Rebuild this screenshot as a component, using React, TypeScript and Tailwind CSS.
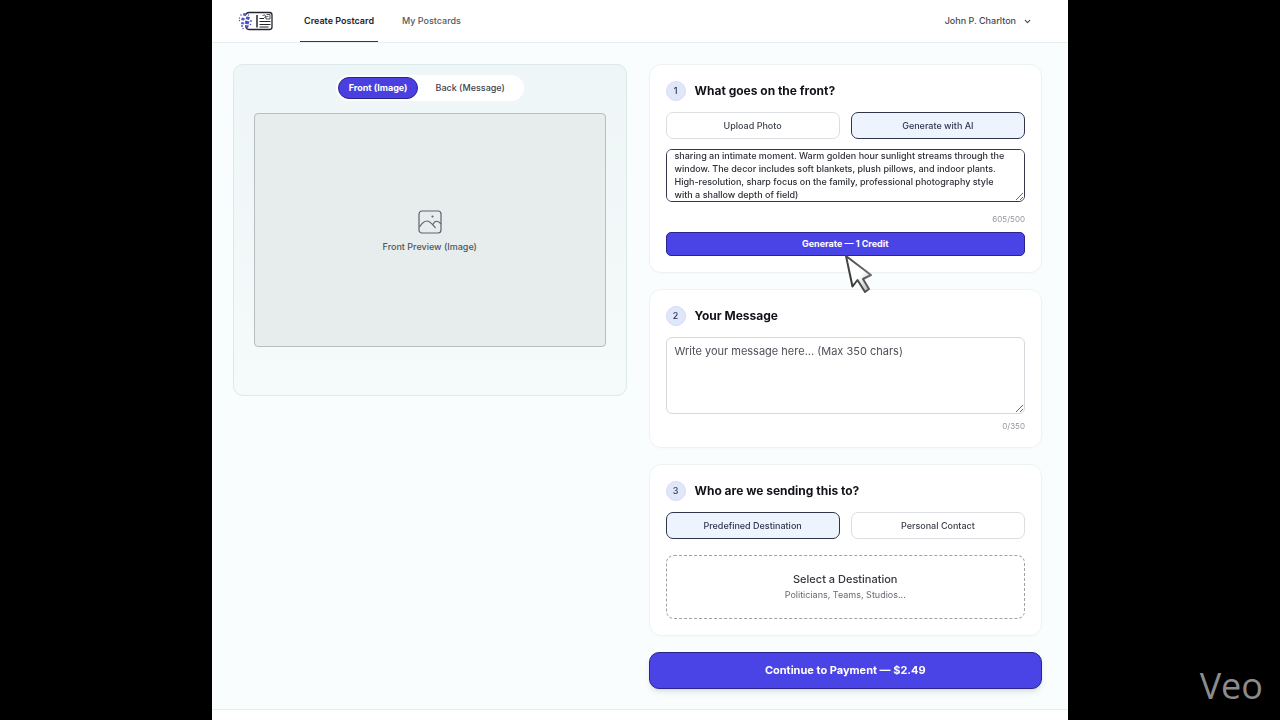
import { useState } from "react";
import { ChevronDown } from "lucide-react";

const PROMPT =
  "A cozy living room with a family of four sitting on the sofa,\nsharing an intimate moment. Warm golden hour sunlight streams through the window. The decor includes soft blankets, plush pillows, and indoor plants. High-resolution, sharp focus on the family, professional photography style with a shallow depth of field)";

const Logo = () => (
  <svg viewBox="0 0 36 22" className="h-[22px] w-9" fill="none" aria-hidden="true">
    <path d="M8 4.5c.5-1.500 1.500-2 3-2h20.500a2.500 2.500 0 0 1 2.500 2.500v12a2.500 2.500 0 0 1-2.500 2.500H11c-1.500 0-2.500-.5-3-2" stroke="#23242e" strokeWidth="1.3" />
    <path d="M19 5v12.500" stroke="#23242e" strokeWidth="1.5" />
    <path d="M21.500 8.500h4.500M21.500 11.500h11M21.500 14.500h11M21.500 17h9" stroke="#23242e" strokeWidth="1" />
    <path d="M24.500 6c1-1.500 2.500-1.500 3 0s-1 2-1.500 1M28.500 4.500h3.500v4.500h-4c-.5-2 .5-3 2.500-2.500" stroke="#23242e" strokeWidth="0.8" />
    <g fill="#4a52c4">
      <path d="M5.500 3l3 .5-.5 2.500-3-.5zM8.500 6.500l3.500.5-1 3-3.500-1zM4 7.500l3 1-1 2-3-.5zM7.500 10.500l4 1-1 3-4-1zM3.500 12l2.500.5-.5 2-2.500-.5zM7 15l4 .5-1.500 3-2.500-1z" />
      <circle cx="3" cy="5" r="0.800" />
      <circle cx="1.500" cy="8" r="0.700" />
      <circle cx="1.500" cy="10.500" r="0.700" />
      <circle cx="13" cy="11" r="0.900" />
      <circle cx="12.500" cy="14.500" r="0.800" />
      <circle cx="4" cy="16" r="0.900" />
      <circle cx="10.500" cy="5" r="0.700" />
      <circle cx="5" cy="18.500" r="0.700" />
    </g>
  </svg>
);

const PreviewIcon = () => (
  <svg viewBox="0 0 24 24" className="h-6 w-6" fill="none" stroke="#5b6370" strokeWidth="1.2" aria-hidden="true">
    <rect x="1" y="1" width="22" height="22" rx="3" />
    <path d="M1.500 17c2.500-4 5-6 7.500-6 3 0 5 3 8.500 7" />
    <path d="M15 14.500c1.500-4 5-4.500 8-.5" />
    <circle cx="14.500" cy="6.500" r="0.500" fill="#5b6370" />
  </svg>
);

const Cursor = () => (
  <svg viewBox="0 0 30 42" className="pointer-events-none absolute top-[21px] left-1/2 h-[42px] w-[30px]" aria-hidden="true">
    <defs>
      <linearGradient id="tail" x1="0" y1="0" x2="1" y2="1">
        <stop offset="0.550" stopColor="#fff" />
        <stop offset="1" stopColor="#aaa" />
      </linearGradient>
      <linearGradient id="edge" x1="0" y1="1" x2="1" y2="0.300">
        <stop offset="0" stopColor="#222" />
        <stop offset="1" stopColor="#777" />
      </linearGradient>
    </defs>
    <path d="M1 3l6.500 30.500 5-6.500L20 39l4-3-6-10 8-4z" fill="url(#tail)" stroke="url(#edge)" strokeWidth="2" strokeLinejoin="round" />
  </svg>
);

const StepTitle = ({ step, title }: { step: number; title: string }) => (
  <div className="flex items-center gap-[9px]">
    <span className="flex h-5 w-5 items-center justify-center rounded-full border border-[#d5ddf3] bg-[#e1e7fa] text-[9px] font-medium text-[#2b3350]">
      {step}
    </span>
    <h2 className="text-[12px] leading-5 font-bold text-[#111318]">{title}</h2>
  </div>
);

const Choices = ({ options, value, onChange }: { options: string[]; value: string; onChange: (v: string) => void }) => (
  <div className="mt-[11px] grid grid-cols-2 gap-[11px]">
    {options.map((option) => (
      <button
        key={option}
        type="button"
        onClick={() => onChange(option)}
        className={`h-[27px] rounded-[7px] border text-[9px] font-medium ${
          option === value ? "border-[#30364a] bg-[#edf4fe] text-[#30364f]" : "border-[#dcdee2] bg-white text-[#3d4149]"
        }`}
      >
        {option}
      </button>
    ))}
  </div>
);

const card = "rounded-xl border border-[#edf3f4] bg-white px-4 pt-4 shadow-[0_1px_2px_rgba(0,0,0,0.02)]";

export default function App() {
  const [side, setSide] = useState("Front (Image)");
  const [source, setSource] = useState("Generate with AI");
  const [recipient, setRecipient] = useState("Predefined Destination");
  const [message, setMessage] = useState("");

  return (
    <div className="relative min-h-screen overflow-hidden bg-black font-['Inter',sans-serif]">
      <div className="mx-auto flex min-h-screen w-full max-w-[856px] flex-col bg-[#f9fdfd]">
        <header className="flex h-[43px] items-stretch border-b border-[#e8edef] bg-white pr-9 pl-[26px]">
          <a href="#" aria-label="Home" className="flex items-center">
            <Logo />
          </a>
          <nav className="ml-[26px] flex gap-[22px] text-[9px]">
            <a href="#create" className="flex items-center border-b border-[#33384a] px-1 font-semibold text-[#22252e]">
              Create Postcard
            </a>
            <a href="#mine" className="flex items-center border-b border-transparent px-[2px] font-medium text-[#555962]">
              My Postcards
            </a>
          </nav>
          <button type="button" className="ml-auto flex items-center gap-[7px] text-[9px] font-medium text-[#44474e]">
            John P. Charlton
            <ChevronDown size={9} strokeWidth={3} />
          </button>
        </header>

        <main className="grid flex-1 grid-cols-2 items-start gap-[22px] pt-[21px] pr-[26px] pl-[21px]">
          <section className="h-[332px] rounded-[10px] border border-[#dde8e9] bg-linear-to-b from-[#eff6f7] to-[#f5fafa] px-5 pt-[10px]">
            <div className="mx-auto flex w-fit rounded-full bg-white p-[2px]">
              {["Front (Image)", "Back (Message)"].map((label) => (
                <button
                  key={label}
                  type="button"
                  onClick={() => setSide(label)}
                  className={`h-[22px] rounded-full border text-[9px] ${
                    label === side
                      ? "border-[#2a2490] bg-[#4a40e0] px-[10px] font-bold text-white"
                      : "border-transparent px-4 font-medium text-[#3f434b]"
                  }`}
                >
                  {label}
                </button>
              ))}
            </div>
            <div className="mt-3 flex h-[234px] flex-col items-center justify-center gap-[5px] rounded border border-[#b5bec0] bg-[#e7eced] pt-1">
              <PreviewIcon />
              <p className="text-[9px] leading-4 font-medium text-[#50565f]">Front Preview (Image)</p>
            </div>
          </section>

          <div className="flex flex-col gap-4">
            <section className={`${card} pb-4`}>
              <StepTitle step={1} title="What goes on the front?" />
              <Choices options={["Upload Photo", "Generate with AI"]} value={source} onChange={setSource} />
              <textarea
                aria-label="Image prompt"
                ref={(el) => {
                  if (el) el.scrollTop = el.scrollHeight;
                }}
                defaultValue={PROMPT}
                className="mt-[10px] block h-[53px] w-full [scrollbar-width:none] rounded-[6px] border border-[#34384a] bg-white pr-4 pl-2 text-[9px] leading-[13px] font-medium text-[#2d3037]"
              />
              <p className="mt-[10px] text-right text-[8px] leading-[14px] text-[#92969e]">605/500</p>
              <div className="relative mt-[6px]">
                <button type="button" className="block h-6 w-full rounded-[5px] border border-[#2a2490] bg-[#4a43e6] text-[9px] font-bold text-white">
                  Generate — 1 Credit
                </button>
                <Cursor />
              </div>
            </section>

            <section className={`${card} pb-[14px]`}>
              <StepTitle step={2} title="Your Message" />
              <textarea
                aria-label="Your message"
                value={message}
                onChange={(e) => setMessage(e.target.value)}
                placeholder="Write your message here... (Max 350 chars)"
                className="mt-[11px] block h-[77px] w-full rounded-[6px] border border-[#d5d8dc] bg-white px-2 py-[5px] text-[11px] leading-4 text-[#333] placeholder:text-[#4c5058]"
              />
              <p className="mt-[5px] text-right text-[8px] leading-[14px] text-[#92969e]">{message.length}/350</p>
            </section>

            <section className={`${card} pb-4`}>
              <StepTitle step={3} title="Who are we sending this to?" />
              <Choices options={["Predefined Destination", "Personal Contact"]} value={recipient} onChange={setRecipient} />
              <button type="button" className="mt-4 block h-16 w-full rounded-[8px] border border-dashed border-[#9da1a8]">
                <span className="block text-[11px] leading-[15px] font-medium text-[#33363d]">Select a Destination</span>
                <span className="block text-[9px] leading-[15px] text-[#666a72]">Politicians, Teams, Studios...</span>
              </button>
            </section>

            <button type="button" className="h-[37px] rounded-[10px] border border-[#2a2490] bg-[#4a43e6] text-[11px] font-bold text-white shadow-md">
              Continue to Payment — $2.49
            </button>
          </div>
        </main>
        <footer className="mt-5 h-[11px] border-t border-[#e8edef] bg-white" />
      </div>
      <span className="absolute right-[17px] bottom-[14px] font-['Open_Sans',sans-serif] text-[36px] leading-10 text-[#8c8c8c]">Veo</span>
    </div>
  );
}
